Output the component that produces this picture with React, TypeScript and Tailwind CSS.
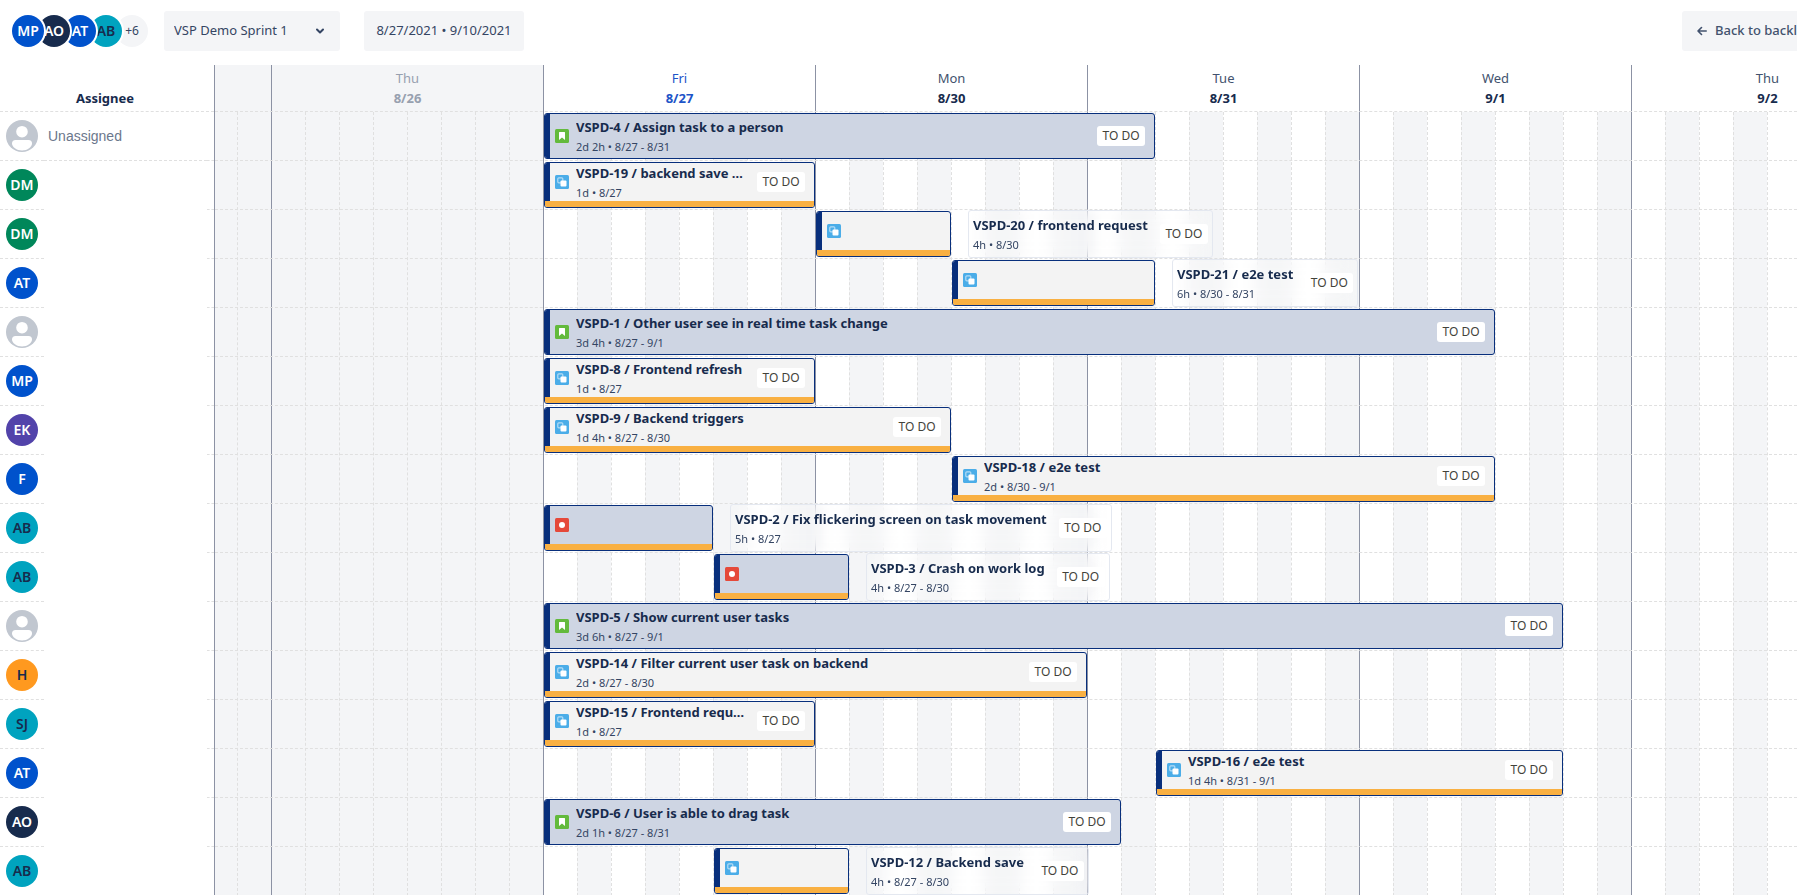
import React from 'react';
import clsx from 'clsx';

type TaskType = 'story' | 'subtask' | 'bug';

interface Task {
    title: string;
    info: string;
    type: TaskType;
    start: number;
    length: number;
    outside?: boolean;
}

interface Row {
    initials?: string;
    name?: string;
    color?: string;
    task: Task;
}

// One slot is one working hour, eight of them make a day
const SLOT = 34;
const FIRST_SLOT = 328;

const BLUE = 'bg-[#0052cc] text-white';
const NAVY = 'bg-[#172b4d] text-white';
const TEAL = 'bg-[#00a3bf] text-[#172b4d]';
const GREEN = 'bg-[#00875a] text-white';
const PURPLE = 'bg-[#5243aa] text-white';
const ORANGE = 'bg-[#ff991f] text-[#172b4d]';

const team = [
    { initials: 'MP', color: BLUE, layer: 'z-40' },
    { initials: 'AO', color: NAVY, layer: 'z-30' },
    { initials: 'AT', color: BLUE, layer: 'z-20' },
    { initials: 'AB', color: TEAL, layer: 'z-10' },
];

const days = [
    { name: 'Thu', date: '8/26', off: true },
    { name: 'Fri', date: '8/27', today: true },
    { name: 'Mon', date: '8/30' },
    { name: 'Tue', date: '8/31' },
    { name: 'Wed', date: '9/1' },
    { name: 'Thu', date: '9/2' },
];

const rows: Row[] = [
    { name: 'Unassigned', task: { title: 'VSPD-4 / Assign task to a person', info: '2d 2h • 8/27 - 8/31', type: 'story', start: 0, length: 18 } },
    { initials: 'DM', color: GREEN, task: { title: 'VSPD-19 / backend save request', info: '1d • 8/27', type: 'subtask', start: 0, length: 8 } },
    { initials: 'DM', color: GREEN, task: { title: 'VSPD-20 / frontend request', info: '4h • 8/30', type: 'subtask', start: 8, length: 4, outside: true } },
    { initials: 'AT', color: BLUE, task: { title: 'VSPD-21 / e2e test', info: '6h • 8/30 - 8/31', type: 'subtask', start: 12, length: 6, outside: true } },
    { task: { title: 'VSPD-1 / Other user see in real time task change', info: '3d 4h • 8/27 - 9/1', type: 'story', start: 0, length: 28 } },
    { initials: 'MP', color: BLUE, task: { title: 'VSPD-8 / Frontend refresh', info: '1d • 8/27', type: 'subtask', start: 0, length: 8 } },
    { initials: 'EK', color: PURPLE, task: { title: 'VSPD-9 / Backend triggers', info: '1d 4h • 8/27 - 8/30', type: 'subtask', start: 0, length: 12 } },
    { initials: 'F', color: BLUE, task: { title: 'VSPD-18 / e2e test', info: '2d • 8/30 - 9/1', type: 'subtask', start: 12, length: 16 } },
    { initials: 'AB', color: TEAL, task: { title: 'VSPD-2 / Fix flickering screen on task movement', info: '5h • 8/27', type: 'bug', start: 0, length: 5, outside: true } },
    { initials: 'AB', color: TEAL, task: { title: 'VSPD-3 / Crash on work log', info: '4h • 8/27 - 8/30', type: 'bug', start: 5, length: 4, outside: true } },
    { task: { title: 'VSPD-5 / Show current user tasks', info: '3d 6h • 8/27 - 9/1', type: 'story', start: 0, length: 30 } },
    { initials: 'H', color: ORANGE, task: { title: 'VSPD-14 / Filter current user task on backend', info: '2d • 8/27 - 8/30', type: 'subtask', start: 0, length: 16 } },
    { initials: 'SJ', color: TEAL, task: { title: 'VSPD-15 / Frontend request', info: '1d • 8/27', type: 'subtask', start: 0, length: 8 } },
    { initials: 'AT', color: BLUE, task: { title: 'VSPD-16 / e2e test', info: '1d 4h • 8/31 - 9/1', type: 'subtask', start: 18, length: 12 } },
    { initials: 'AO', color: NAVY, task: { title: 'VSPD-6 / User is able to drag task', info: '2d 1h • 8/27 - 8/31', type: 'story', start: 0, length: 17 } },
    { initials: 'AB', color: TEAL, task: { title: 'VSPD-12 / Backend save', info: '4h • 8/27 - 8/30', type: 'subtask', start: 5, length: 4, outside: true } },
];

const TaskIcon = ({ type }: { type: TaskType }) => (
    <svg className="w-3.5 h-3.5 shrink-0" viewBox="0 0 14 14">
        {type === 'story' && (
            <>
                <rect width="14" height="14" rx="1.5" fill="#63ba3c" />
                <path d="M4.5 3h5a.5.5 0 0 1 .5.5V11L7 8.4 4 11V3.5a.5.5 0 0 1 .5-.5z" fill="#fff" />
            </>
        )}
        {type === 'subtask' && (
            <>
                <rect width="14" height="14" rx="1.5" fill="#4bade8" />
                <rect x="2.8" y="2.8" width="5" height="5" rx="1" fill="none" stroke="#b4dcf5" strokeWidth="1.2" />
                <rect x="5.5" y="5.5" width="6" height="6" rx="1" fill="#fff" />
            </>
        )}
        {type === 'bug' && (
            <>
                <rect width="14" height="14" rx="1.5" fill="#e5493a" />
                <circle cx="7" cy="7" r="3" fill="#fff" />
            </>
        )}
    </svg>
);

const EmptyAvatar = () => (
    <svg className="w-8 h-8 shrink-0" viewBox="0 0 32 32">
        <circle cx="16" cy="16" r="16" fill="#c1c7d0" />
        <circle cx="16" cy="11.7" r="5.8" fill="#fff" />
        <path d="M6 23.5a3.5 3.5 0 0 1 3.5-3.5h13a3.5 3.5 0 0 1 3.5 3.5c0 3.5-4.5 7-10 7s-10-3.5-10-7z" fill="#fff" />
    </svg>
);

const Avatar = ({ initials, color, className }: { initials: string; color?: string; className?: string }) => (
    <span className={clsx('w-8 h-8 shrink-0 rounded-full flex items-center justify-center text-sm font-semibold', color, className)}>
        {initials}
    </span>
);

const Status = () => (
    <span className="w-12 h-5 shrink-0 rounded-[3px] bg-white flex items-center justify-center text-xs text-[#42423a]">TO DO</span>
);

const TaskText = ({ task }: { task: Task }) => (
    <div className="min-w-0 flex-1 pt-0.5">
        <p className="truncate text-[13px] leading-5 font-bold">{task.title}</p>
        <p className="truncate text-[11px] leading-5 text-[#344563]">{task.info}</p>
    </div>
);

const TaskBar = ({ task }: { task: Task }) => (
    <div
        className={clsx(
            'h-[46px] shrink-0 flex flex-col border border-[#082f7c] rounded-[3px] overflow-hidden',
            task.type === 'subtask' ? 'bg-[#f3f3f3]' : 'bg-[#ced5e3]'
        )}
        style={{ width: task.length * SLOT - 1 }}
    >
        <div className="flex-1 min-h-0 flex items-center border-l-[5px] border-[#082f7c] pl-[5px] pr-[9px]">
            <TaskIcon type={task.type} />
            {!task.outside && (
                <div className="flex-1 min-w-0 flex items-center gap-2.5 pl-[7px]">
                    <TaskText task={task} />
                    <Status />
                </div>
            )}
        </div>
        {task.type !== 'story' && <div className="h-1.5 shrink-0 bg-[#f9b042]" />}
    </div>
);

const TaskLabel = ({ task }: { task: Task }) => (
    <div className="h-12 ml-[17px] -mt-px shrink-0 flex items-center gap-3 px-1 border border-[#e4e8f0] rounded-[3px] bg-white/10 backdrop-blur-[8px]">
        <TaskText task={task} />
        <Status />
    </div>
);

// Background of one day: a solid line on its left, dashed lines between the hours
const DayColumn = ({ off, head }: { off?: boolean; head?: React.ReactNode }) => (
    <div className={clsx('w-[272px] shrink-0 flex flex-col border-l border-[#8c92a4]', off && 'bg-[#f4f5f7]')}>
        <div className="h-[47px] shrink-0 flex flex-col items-center pt-[3px] text-[13px] leading-5">{head}</div>
        <div className="flex-1 flex -ml-px">
            {[0, 1, 2, 3, 4, 5, 6, 7].map(slot => (
                <div
                    key={slot}
                    className={clsx(
                        'w-[34px] border-l border-dashed',
                        slot === 0 ? 'border-transparent' : 'border-[#e0e0e0]',
                        slot % 2 === 1 && 'bg-[#f4f5f7]'
                    )}
                />
            ))}
        </div>
    </div>
);

const Toolbar = () => (
    <header className="h-[65px] shrink-0 min-w-[1827px] flex items-start pt-[11px] pl-3 text-[13px]">
        <div className="flex items-center h-10">
            {team.map(user => (
                <Avatar key={user.initials} initials={user.initials} color={user.color} className={clsx('relative -mr-1.5 ring-2 ring-white', user.layer)} />
            ))}
            <button className="w-8 h-8 rounded-full bg-[#f4f5f7] text-xs text-[#344563]">+6</button>
        </div>
        <div className="relative ml-4">
            <select aria-label="Sprint" className="appearance-none w-44 h-10 rounded-[3px] bg-[#f4f5f7] pl-2.5 pr-8 text-[#344563]">
                <option>VSP Demo Sprint 1</option>
            </select>
            <svg className="absolute right-4 top-4 w-2 h-2 pointer-events-none" viewBox="0 0 8 8" fill="none" stroke="#344563" strokeWidth="2" strokeLinecap="round" strokeLinejoin="round">
                <path d="M1 2.5l3 3 3-3" />
            </svg>
        </div>
        <button className="ml-6 w-40 h-10 rounded-[3px] bg-[#f4f5f7] text-[#344563] whitespace-nowrap">8/27/2021 • 9/10/2021</button>
        <button className="ml-auto w-[145px] h-10 rounded-[3px] bg-[#f4f5f7] flex items-center gap-2 pl-[15px] font-medium text-[#42526e] whitespace-nowrap">
            <svg className="w-2.5 h-2.5" viewBox="0 0 10 10" fill="none" stroke="#42526e" strokeWidth="1.6" strokeLinecap="round" strokeLinejoin="round">
                <path d="M9.2 5H1M4.5 1.5L1 5l3.5 3.5" />
            </svg>
            Back to backlog
        </button>
    </header>
);

const Assignees = () => (
    <aside className="w-[215px] shrink-0 border-r border-[#8c92a4]">
        <div className="h-[47px] flex items-end justify-center pb-[3px] pr-1 text-[13px] leading-5 font-bold border-b border-dashed border-[#e0e0e0]">Assignee</div>
        <ul>
            {rows.map(({ initials, color, name }, i) => (
                <li key={i} className="h-[49px] flex">
                    <div className="w-11 pl-1.5 flex items-center border-b border-dashed border-[#e0e0e0]">
                        {initials ? <Avatar initials={initials} color={color} /> : <EmptyAvatar />}
                    </div>
                    <div
                        className={clsx(
                            'flex-1 flex items-center pl-1 text-sm text-[#6b778c] font-["Liberation_Sans",Arial,sans-serif]',
                            name && 'border-b border-dashed border-[#e0e0e0]'
                        )}
                    >
                        {name}
                    </div>
                    <div className="w-[7px] border-b border-dashed border-[#e0e0e0]" />
                </li>
            ))}
        </ul>
    </aside>
);

const Timeline = () => (
    <section className="relative flex-1 min-w-0 overflow-hidden">
        <div className="absolute inset-0 flex">
            <div className="w-14 shrink-0 flex justify-end overflow-hidden">
                <DayColumn off />
            </div>
            {days.map(day => (
                <DayColumn
                    key={day.date}
                    off={day.off}
                    head={
                        <>
                            <span className={clsx(day.off ? 'text-[#97a0af]' : day.today ? 'text-[#1d54c8]' : 'text-[#42526e]')}>{day.name}</span>
                            <span className={clsx('font-bold', day.off ? 'text-[#97a0af]' : day.today ? 'text-[#1d54c8]' : 'text-[#172b4d]')}>{day.date}</span>
                        </>
                    }
                />
            ))}
        </div>
        <div className="relative pt-[46px]">
            <div className="border-t border-dashed border-[#e0e0e0]" />
            {rows.map(({ task }, i) => (
                <div key={i} className="h-[49px] flex pt-px border-b border-dashed border-[#e0e0e0]">
                    <div className="shrink-0" style={{ width: FIRST_SLOT + 1 + task.start * SLOT }} />
                    <TaskBar task={task} />
                    {task.outside && <TaskLabel task={task} />}
                </div>
            ))}
        </div>
    </section>
);

const App: React.FC = () => {
    return (
        <div className='h-screen overflow-hidden flex flex-col bg-white text-[#172b4d] font-["Noto_Sans","Segoe_UI",sans-serif]'>
            <Toolbar />
            <main className="flex items-start flex-1 min-h-0">
                <Assignees />
                <Timeline />
            </main>
        </div>
    );
};

export default App;
